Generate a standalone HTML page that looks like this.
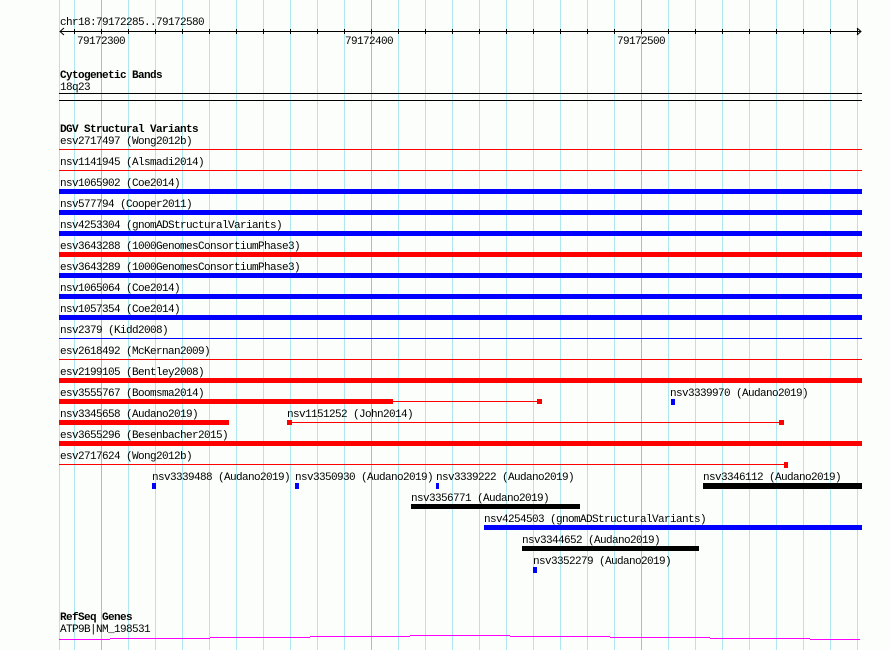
<!DOCTYPE html>
<html><head><meta charset="utf-8"><style>
html,body{margin:0;padding:0;background:#fbfefb;}
svg{display:block}
text{font-family:"Liberation Mono","DejaVu Sans Mono",monospace;font-size:11px;letter-spacing:-0.6px;fill:#000}
.b{font-weight:bold}
</style></head><body>
<svg width="890" height="650" xmlns="http://www.w3.org/2000/svg">
<rect width="890" height="650" fill="#fbfefb"/>
<g stroke="#aee8ee" stroke-width="1">
<line x1="59.5" y1="0" x2="59.5" y2="650"/>
<line x1="74.5" y1="0" x2="74.5" y2="650"/>
<line x1="128.5" y1="0" x2="128.5" y2="650"/>
<line x1="155.5" y1="0" x2="155.5" y2="650"/>
<line x1="182.5" y1="0" x2="182.5" y2="650"/>
<line x1="209.5" y1="0" x2="209.5" y2="650"/>
<line x1="236.5" y1="0" x2="236.5" y2="650"/>
<line x1="263.5" y1="0" x2="263.5" y2="650"/>
<line x1="290.5" y1="0" x2="290.5" y2="650"/>
<line x1="317.5" y1="0" x2="317.5" y2="650"/>
<line x1="344.5" y1="0" x2="344.5" y2="650"/>
<line x1="398.5" y1="0" x2="398.5" y2="650"/>
<line x1="425.5" y1="0" x2="425.5" y2="650"/>
<line x1="452.5" y1="0" x2="452.5" y2="650"/>
<line x1="479.5" y1="0" x2="479.5" y2="650"/>
<line x1="506.5" y1="0" x2="506.5" y2="650"/>
<line x1="533.5" y1="0" x2="533.5" y2="650"/>
<line x1="560.5" y1="0" x2="560.5" y2="650"/>
<line x1="587.5" y1="0" x2="587.5" y2="650"/>
<line x1="614.5" y1="0" x2="614.5" y2="650"/>
<line x1="668.5" y1="0" x2="668.5" y2="650"/>
<line x1="695.5" y1="0" x2="695.5" y2="650"/>
<line x1="722.5" y1="0" x2="722.5" y2="650"/>
<line x1="749.5" y1="0" x2="749.5" y2="650"/>
<line x1="776.5" y1="0" x2="776.5" y2="650"/>
<line x1="803.5" y1="0" x2="803.5" y2="650"/>
<line x1="830.5" y1="0" x2="830.5" y2="650"/>
<line x1="857.5" y1="0" x2="857.5" y2="650"/>
</g>
<g stroke="#8ec6e6" stroke-width="1">
<line x1="101.5" y1="0" x2="101.5" y2="650"/>
<line x1="371.5" y1="0" x2="371.5" y2="650"/>
<line x1="641.5" y1="0" x2="641.5" y2="650"/>
</g>
<!-- ruler -->
<text x="60" y="25">chr18:79172285..79172580</text>
<g stroke="#000" stroke-width="1" fill="none">
<line x1="60" y1="31.5" x2="861" y2="31.5"/>
<polyline points="64,28 60,31.5 64,35"/>
<polyline points="857,28 861,31.5 857,35"/>
<path d="M74.5 29v5M101.5 29v5M128.5 29v5M155.5 29v5M182.5 29v5M209.5 29v5M236.5 29v5M263.5 29v5M290.5 29v5M317.5 29v5M344.5 29v5M371.5 29v5M398.5 29v5M425.5 29v5M452.5 29v5M479.5 29v5M506.5 29v5M533.5 29v5M560.5 29v5M587.5 29v5M614.5 29v5M641.5 29v5M668.5 29v5M695.5 29v5M722.5 29v5M749.5 29v5M776.5 29v5M803.5 29v5M830.5 29v5M857.5 29v5"/>
</g>
<text x="77" y="44">79172300</text>
<text x="345" y="44">79172400</text>
<text x="617" y="44">79172500</text>
<!-- cyto -->
<text x="60" y="78" class="b">Cytogenetic Bands</text>
<text x="60" y="90">18q23</text>
<rect x="59" y="93" width="803" height="1" fill="#000"/>
<rect x="59" y="100" width="803" height="1" fill="#000"/>
<!-- DGV -->
<text x="60" y="132" class="b">DGV Structural Variants</text>
<text x="60" y="144">esv2717497 (Wong2012b)</text>
<rect x="59" y="149" width="803" height="1" fill="#f00"/>
<text x="60" y="165">nsv1141945 (Alsmadi2014)</text>
<rect x="59" y="170" width="803" height="1" fill="#f00"/>
<text x="60" y="186">nsv1065902 (Coe2014)</text>
<rect x="59" y="189" width="803" height="5" fill="#00f"/>
<text x="60" y="207">nsv577794 (Cooper2011)</text>
<rect x="59" y="210" width="803" height="5" fill="#00f"/>
<text x="60" y="228">nsv4253304 (gnomADStructuralVariants)</text>
<rect x="59" y="231" width="803" height="5" fill="#00f"/>
<text x="60" y="249">esv3643288 (1000GenomesConsortiumPhase3)</text>
<rect x="59" y="252" width="803" height="5" fill="#f00"/>
<text x="60" y="270">esv3643289 (1000GenomesConsortiumPhase3)</text>
<rect x="59" y="273" width="803" height="5" fill="#00f"/>
<text x="60" y="291">nsv1065064 (Coe2014)</text>
<rect x="59" y="294" width="803" height="5" fill="#00f"/>
<text x="60" y="312">nsv1057354 (Coe2014)</text>
<rect x="59" y="315" width="803" height="5" fill="#00f"/>
<text x="60" y="333">nsv2379 (Kidd2008)</text>
<rect x="59" y="338" width="803" height="1" fill="#00f"/>
<text x="60" y="354">esv2618492 (McKernan2009)</text>
<rect x="59" y="359" width="803" height="1" fill="#f00"/>
<text x="60" y="375">esv2199105 (Bentley2008)</text>
<rect x="59" y="378" width="803" height="5" fill="#f00"/>
<text x="60" y="396">esv3555767 (Boomsma2014)</text>
<rect x="59" y="399" width="334" height="5" fill="#f00"/>
<rect x="393" y="401" width="146" height="1" fill="#f00"/>
<rect x="537" y="399" width="5" height="5" fill="#f00"/>
<text x="670" y="396">nsv3339970 (Audano2019)</text>
<rect x="671" y="399" width="4" height="6" fill="#00f"/>
<text x="60" y="417">nsv3345658 (Audano2019)</text>
<rect x="59" y="420" width="170" height="5" fill="#f00"/>
<text x="287" y="417">nsv1151252 (John2014)</text>
<rect x="287" y="420" width="5" height="5" fill="#f00"/>
<rect x="291" y="422" width="490" height="1" fill="#f00"/>
<rect x="779" y="420" width="5" height="5" fill="#f00"/>
<text x="60" y="438">esv3655296 (Besenbacher2015)</text>
<rect x="59" y="441" width="803" height="5" fill="#f00"/>
<text x="60" y="459">esv2717624 (Wong2012b)</text>
<rect x="59" y="464" width="727" height="1" fill="#f00"/>
<rect x="784" y="462" width="4" height="6" fill="#f00"/>
<text x="152" y="480">nsv3339488 (Audano2019)</text>
<rect x="152" y="483" width="4" height="6" fill="#00f"/>
<text x="295" y="480">nsv3350930 (Audano2019)</text>
<rect x="295" y="483" width="4" height="6" fill="#00f"/>
<text x="436" y="480">nsv3339222 (Audano2019)</text>
<rect x="436" y="483" width="3" height="6" fill="#00f"/>
<text x="703" y="480">nsv3346112 (Audano2019)</text>
<rect x="703" y="483" width="159" height="6" fill="#000"/>
<text x="411" y="501">nsv3356771 (Audano2019)</text>
<rect x="411" y="504" width="169" height="5" fill="#000"/>
<text x="484" y="522">nsv4254503 (gnomADStructuralVariants)</text>
<rect x="484" y="525" width="378" height="5" fill="#00f"/>
<text x="522" y="543">nsv3344652 (Audano2019)</text>
<rect x="522" y="546" width="177" height="5" fill="#000"/>
<text x="533" y="564">nsv3352279 (Audano2019)</text>
<rect x="533" y="567" width="4" height="6" fill="#00f"/>
<!-- RefSeq -->
<text x="60" y="620" class="b">RefSeq Genes</text>
<text x="60" y="632">ATP9B|NM_198531</text>
<path d="M59 639.5H110M110 638.5H210M210 637.5H310M310 636.5H410M410 635.5H510M510 636.5H610M610 637.5H710M710 638.5H810M810 639.5H860" stroke="#f0f" stroke-width="1" fill="none"/>
</svg>
</body></html>
